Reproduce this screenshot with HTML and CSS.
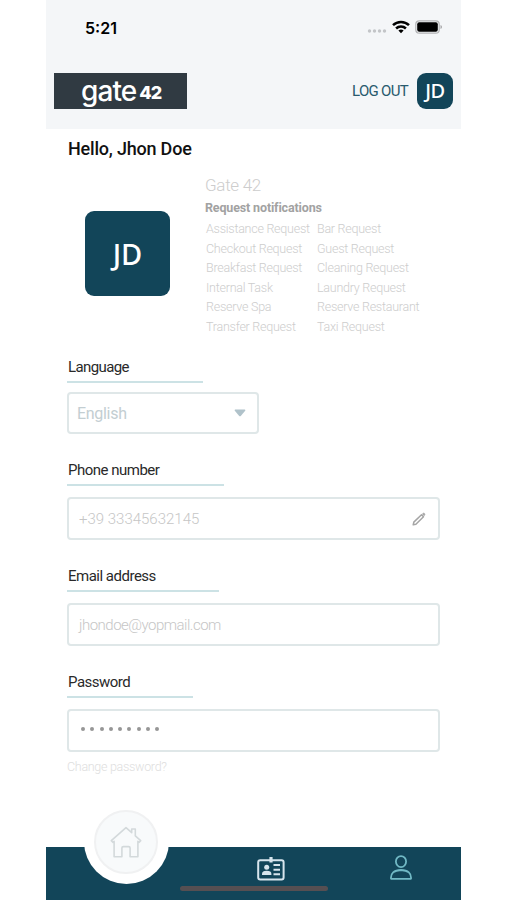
FILE: index.html
```html
<!DOCTYPE html>
<html lang="en">
<head>
    <meta charset="UTF-8">
    <meta name="viewport" content="width=device-width, initial-scale=1.0">
    <title>Profile</title>
    <link rel="stylesheet" href="styles.css">
</head>
<body>
    <div class="phone">
        <header class="header">
            <div class="status-bar">
                <span class="time">5:21</span>
                <div class="status-icons">
                    <svg width="20" height="6" viewBox="0 0 20 6" fill="#c3c5c8">
                        <circle cx="2.5" cy="3" r="1.7"/><circle cx="7.5" cy="3" r="1.7"/><circle cx="12.5" cy="3" r="1.7"/><circle cx="17.5" cy="3" r="1.7"/>
                    </svg>
                    <svg class="wifi" width="18" height="14" viewBox="0 0 18 14" fill="none" stroke="#000" stroke-width="2.5">
                        <path d="M1 5.2a11.5 11.5 0 0 1 16 0M4.1 8.5a7 7 0 0 1 9.8 0"/>
                        <path d="M9 13.3l-2.6-2.7a3.8 3.8 0 0 1 5.2 0z" fill="#000" stroke="none"/>
                    </svg>
                    <svg class="battery" width="28" height="14" viewBox="0 0 28 14">
                        <rect x=".8" y=".8" width="23.4" height="12.4" rx="3.5" fill="none" stroke="#b2b3b5" stroke-width="1.2"/>
                        <rect x="2.2" y="2.2" width="20.6" height="9.6" rx="2" fill="#000"/>
                        <path d="M25.5 5v4q1.5-.7 1.5-2t-1.5-2" fill="#a4a5a7"/>
                    </svg>
                </div>
            </div>
            <div class="top-bar">
                <div class="logo"><span class="logo-name">gate</span><span class="logo-number">42</span></div>
                <div class="account">
                    <a class="logout">LOG OUT</a>
                    <div class="avatar-small">JD</div>
                </div>
            </div>
        </header>

        <main class="content">
            <h1 class="hello">Hello, Jhon Doe</h1>
            <section class="profile">
                <div class="avatar">JD</div>
                <div class="info">
                    <div class="hotel">Gate 42</div>
                    <h2 class="info-title">Request notifications</h2>
                    <div class="requests">
                        <span>Assistance Request</span><span>Bar Request</span>
                        <span>Checkout Request</span><span>Guest Request</span>
                        <span>Breakfast Request</span><span>Cleaning Request</span>
                        <span>Internal Task</span><span>Laundry Request</span>
                        <span>Reserve Spa</span><span>Reserve Restaurant</span>
                        <span>Transfer Request</span><span>Taxi Request</span>
                    </div>
                </div>
            </section>

            <div class="field language">
                <div class="label">Language</div>
                <div class="box select">
                    <span>English</span>
                    <svg width="12" height="8" viewBox="0 0 12 8" fill="#b0c2ca"><path d="M1.2.5h9.6q1 .3.4 1.2L7 6.8q-1 1-2 0L.8 1.7Q.2.8 1.2.5z"/></svg>
                </div>
            </div>
            <div class="field phone-number">
                <div class="label">Phone number</div>
                <div class="box">
                    <span>+39 33345632145</span>
                    <svg width="14" height="14" viewBox="0 0 14 14" fill="none" stroke="#a5a5a5" stroke-width="1.5" stroke-linejoin="round">
                        <path d="M1.2 12.8l.6-2.7 7.7-7.4 2 2-7.6 7.5z"/>
                        <path d="M10.4 1.9l.7-.7q.7-.5 1.4.2t.3 1.5l-.7.8z" fill="#a5a5a5" stroke-width=".6"/>
                    </svg>
                </div>
            </div>
            <div class="field email">
                <div class="label">Email address</div>
                <div class="box"><span>jhondoe@yopmail.com</span></div>
            </div>
            <div class="field password">
                <div class="label">Password</div>
                <div class="box">
                    <div class="dots"><i></i><i></i><i></i><i></i><i></i><i></i><i></i><i></i><i></i></div>
                </div>
            </div>
            <a class="change">Change password?</a>
        </main>

        <nav class="nav">
            <div class="home">
                <div class="home-circle">
                    <svg width="32" height="32" viewBox="0 0 32 32" fill="none" stroke="#d3d9db" stroke-width="1.6" stroke-linejoin="round">
                        <path d="M1.3 14.6L16 1.6l5.7 5V3h3.6v6.8l5.4 4.8-1.5 1.7-1.3-1v15.4h-7.8v-8.6q0-1.5-1.5-1.5h-5.2q-1.5 0-1.5 1.5v8.6H4.1V15.3l-1.3 1z"/>
                    </svg>
                </div>
            </div>
            <svg class="nav-card" width="28" height="24" viewBox="0 0 28 24" fill="none" stroke="#d7e5ed" stroke-width="2">
                <rect x="1.2" y="3.2" width="25.4" height="19.3" rx="2"/>
                <path d="M14 0v5.5" stroke-width="3.2"/>
                <path d="M16.5 8H23M16.5 12.7H23M16.5 17.3H23"/>
                <g fill="#d7e5ed" stroke="none"><circle cx="9.7" cy="10.2" r="2.5"/><path d="M5 18v-1.2q0-3 4.7-3t4.7 3V18z"/></g>
            </svg>
            <svg class="nav-user" width="22" height="25" viewBox="0 0 22 25" fill="none" stroke="#71b9c5" stroke-width="1.8">
                <ellipse cx="11" cy="6.6" rx="5.1" ry="5.5"/>
                <path d="M1 23.8q-.7-8.4 10-8.8 10.7.4 10 8.8z" stroke-linejoin="round"/>
            </svg>
            <div class="home-indicator"></div>
        </nav>
    </div>
</body>
</html>
```

FILE: styles.css
```css
* {
    box-sizing: border-box;
}

body {
    margin: 0;
    background-color: #fff;
    font-family: "Roboto", "Liberation Sans", sans-serif;
}

.phone {
    display: flex;
    flex-direction: column;
    width: 415px;
    height: 900px;
    margin-left: 46px;
    white-space: nowrap;
}

.header {
    height: 129px;
    background-color: #f4f6f8;
}

.status-bar {
    display: flex;
    justify-content: space-between;
    align-items: center;
    height: 55px;
    padding: 0 18px 0 39px;
}

.time {
    font-family: "Inter", sans-serif;
    font-size: 16px;
    font-weight: 600;
}

.status-icons {
    display: flex;
    align-items: center;
}

.status-icons svg:first-child {
    margin-top: 7px;
}

.wifi {
    margin: 0 5px 2px 5px;
}

.battery {
    margin-bottom: 1px;
}

.top-bar {
    display: flex;
    justify-content: space-between;
    align-items: center;
    height: 71px;
    padding: 0 8px;
}

.logo {
    display: flex;
    align-items: center;
    width: 133px;
    height: 36px;
    padding-left: 27px;
    background-color: #303a42;
    color: #fff;
    line-height: 34px;
    overflow: hidden;
}

.logo-name {
    font-family: "Inter", sans-serif;
    font-size: 28px;
    font-weight: 500;
    letter-spacing: -0.9px;
}

.logo-number {
    margin: 4px 0 0 3px;
    font-family: "Inter", sans-serif;
    font-size: 18px;
    font-weight: 800;
    letter-spacing: -1px;
}

.account {
    display: flex;
    align-items: center;
    gap: 9px;
}

.logout {
    color: #285a6d;
    font-size: 15px;
    letter-spacing: -0.7px;
}

.avatar-small,
.avatar {
    display: flex;
    justify-content: center;
    align-items: center;
    background-color: #124559;
    color: #fff;
    font-family: "Noto Sans", sans-serif;
    font-weight: 500;
}

.avatar-small {
    width: 36px;
    height: 36px;
    border-radius: 9px;
    font-size: 20px;
    letter-spacing: -0.5px;
}

.content {
    flex: 1;
    padding: 8px 21px 0;
}

.hello {
    margin: 0;
    padding-left: 1px;
    color: #111;
    font-size: 18px;
    font-weight: 500;
    letter-spacing: -0.2px;
    line-height: 24px;
}

.profile {
    display: flex;
    height: 194px;
    padding: 13px 0 0 18px;
}

.avatar {
    width: 85px;
    height: 85px;
    margin: 37px 35px 0 0;
    border-radius: 9px;
    font-size: 29px;
}

.info {
    color: #cdcdcd;
}

.hotel {
    height: 23px;
    font-size: 17px;
    font-weight: 300;
    letter-spacing: -0.3px;
    line-height: 22px;
}

.info-title {
    margin: 0;
    color: #a2a2a2;
    font-size: 12.5px;
    font-weight: 700;
    letter-spacing: -0.15px;
    line-height: 22px;
}

.requests {
    display: grid;
    grid-template-columns: 111px auto;
    grid-auto-rows: 19.5px;
    padding-left: 1px;
    font-size: 12.5px;
    font-weight: 300;
    letter-spacing: -0.25px;
    line-height: 19.5px;
}

.field {
    height: 106px;
}

.label {
    height: 28px;
    padding-left: 1px;
    border-bottom: 2px solid #cce2e5;
    color: #292929;
    font-size: 15px;
    letter-spacing: -0.5px;
    line-height: 25px;
}

.box {
    display: flex;
    justify-content: space-between;
    align-items: center;
    width: 373px;
    height: 43px;
    margin-top: 11px;
    padding: 0 12px 0 10px;
    border: 2px solid #dfe7e8;
    border-radius: 4px;
    color: #c6c6c6;
    font-size: 15px;
    font-weight: 300;
}

.language {
    height: 103px;
}

.language .label {
    width: 136px;
    letter-spacing: -0.6px;
}

.phone-number .label {
    width: 157px;
}

.email .label {
    width: 152px;
}

.email .box {
    letter-spacing: -0.5px;
}

.password .label {
    width: 126px;
}

.select {
    width: 192px;
    height: 42px;
    margin-top: 9px;
    padding: 0 11px 0 8px;
    color: #c3ced2;
    font-size: 16px;
    font-weight: 400;
    letter-spacing: -0.3px;
}

.dots {
    display: flex;
    gap: 5.3px;
    padding: 0 0 3px 2px;
}

.dots i {
    width: 4px;
    height: 4px;
    border-radius: 50%;
    background-color: #969696;
}

.change {
    display: block;
    margin-top: -17px;
    color: #dedede;
    font-size: 12.5px;
    font-weight: 300;
    letter-spacing: -0.3px;
}

.nav {
    position: relative;
    display: flex;
    height: 53px;
    background-color: #124559;
}

.home {
    display: flex;
    justify-content: center;
    align-items: center;
    width: 85px;
    height: 85px;
    margin: -48px 0 0 38px;
    border-radius: 50%;
    background-color: #fff;
}

.home-circle {
    display: flex;
    justify-content: center;
    align-items: center;
    width: 64px;
    height: 64px;
    margin-right: 1px;
    border: 2px solid #f0f1f2;
    border-radius: 50%;
    background-color: #f8fafb;
}

.nav-card {
    margin: 10px 0 0 88px;
}

.nav-user {
    margin: 8px 0 0 105px;
}

.home-indicator {
    position: absolute;
    left: 134px;
    bottom: 9px;
    width: 148px;
    height: 5px;
    border-radius: 3px;
    background-color: #564f52;
}
```
